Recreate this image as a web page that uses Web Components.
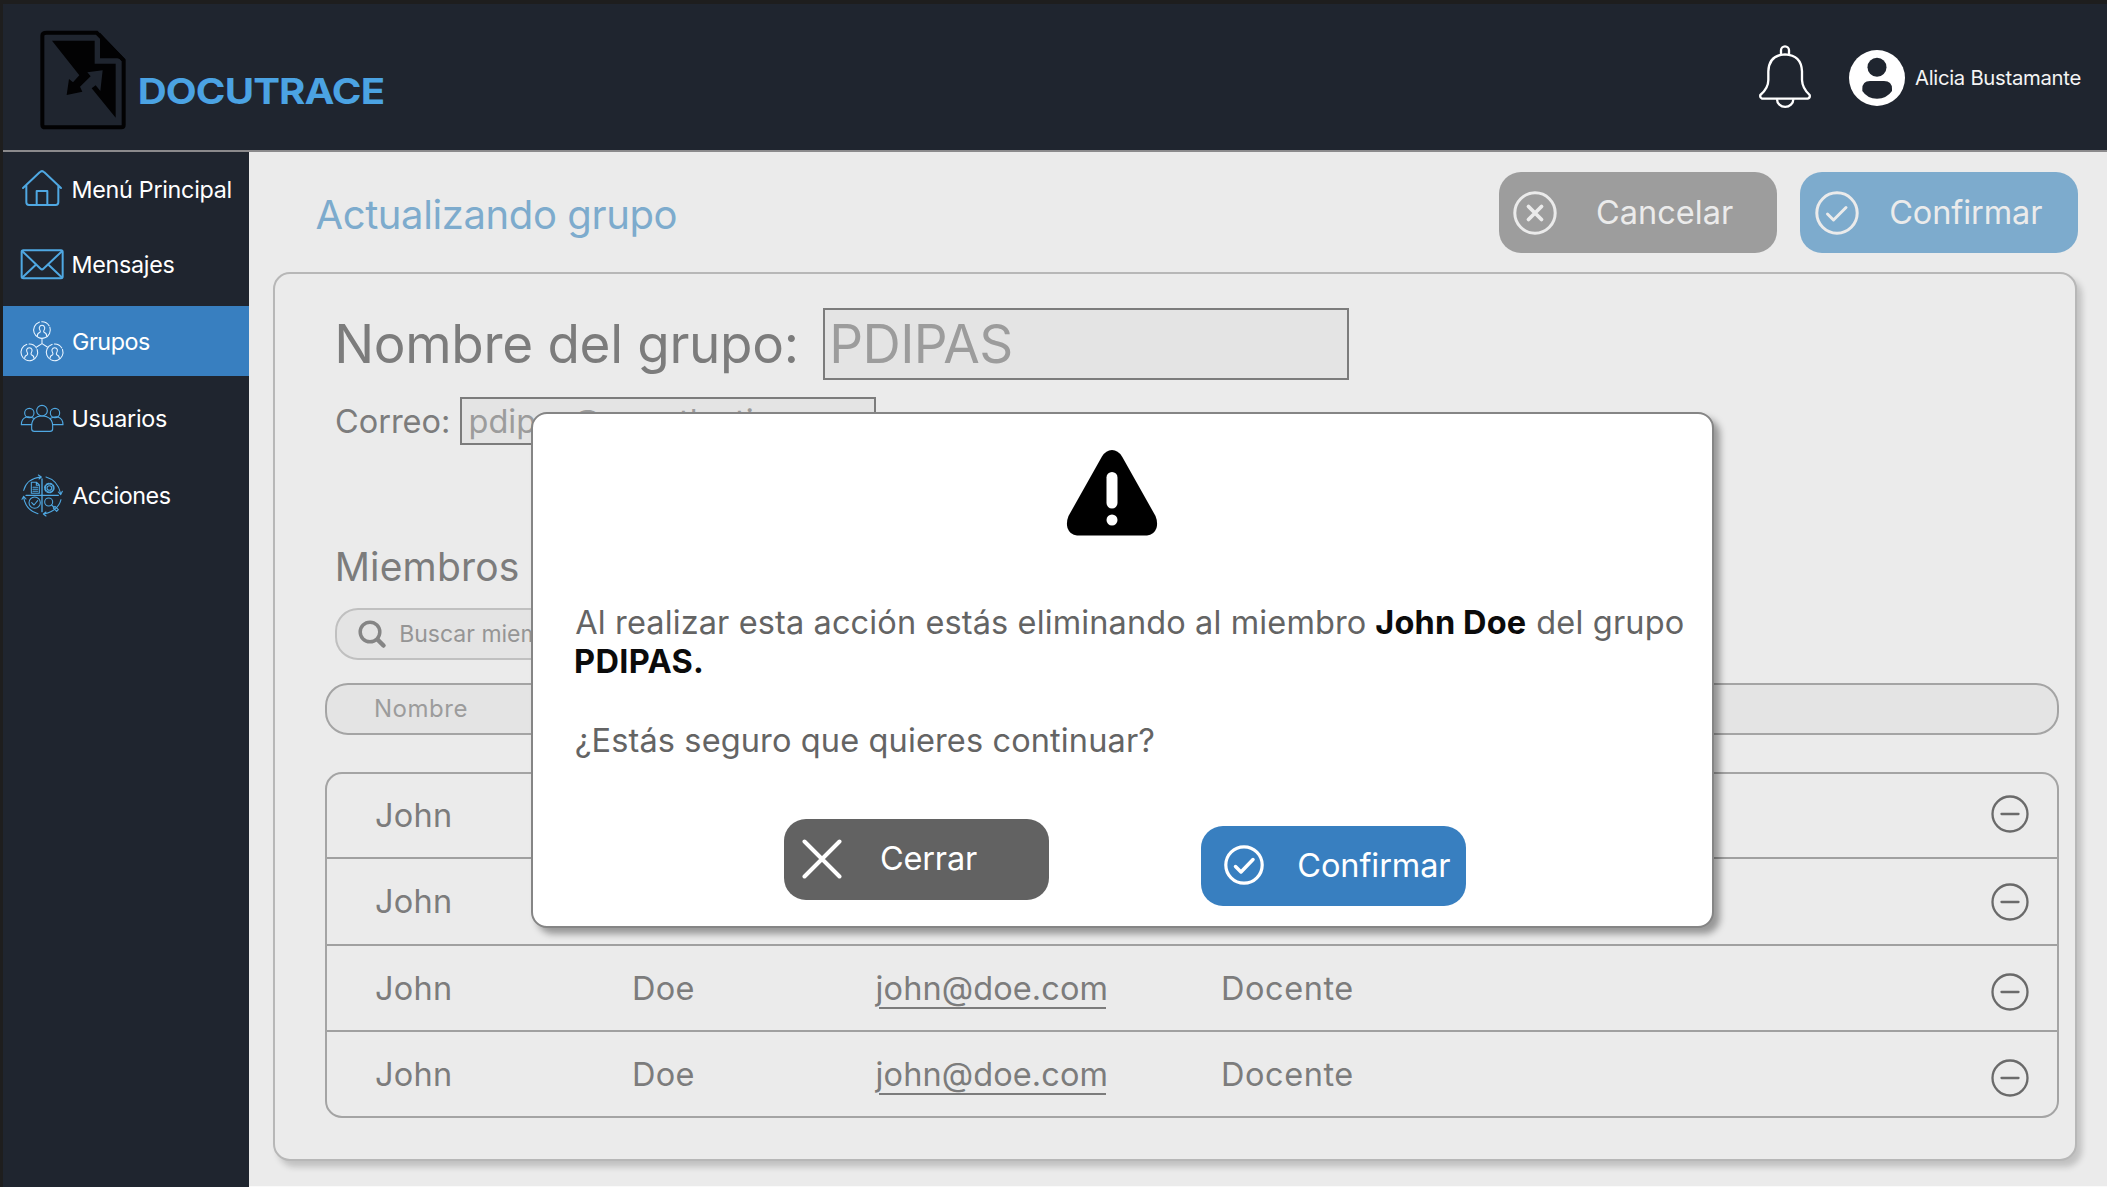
<!DOCTYPE html>
<html lang="es">
<head>
<meta charset="utf-8">
<title>Docutrace</title>
<style>
  html, body { margin: 0; height: 100%; }
  body { background: #1e1e1e; font-family: Inter, "Liberation Sans", sans-serif; overflow: hidden; }
</style>
</head>
<body>
<docu-app></docu-app>
<script>
const define = (name, html, init) => {
  const tpl = document.createElement('template');
  tpl.innerHTML = html;
  customElements.define(name, class extends HTMLElement {
    connectedCallback() {
      if (this.shadowRoot) return;
      this.attachShadow({ mode: 'open' }).append(tpl.content.cloneNode(true));
      if (init) init.call(this, this.shadowRoot);
    }
  });
};

/* Text whose visible ink starts at the box's left edge; "ink" sets the ink width through tracking. */
const ctx = document.createElement('canvas').getContext('2d');
define('ink-text', `<style>
  :host { display: block; line-height: 1; white-space: nowrap; flex: none; }
  span { display: block; }
</style><span><slot></slot></span>`, function (root) {
  const span = root.querySelector('span');
  const size = parseFloat(this.getAttribute('size'));
  const weight = this.getAttribute('weight') || '400';
  this.style.font = `${weight} ${size}px/1 Inter, "Liberation Sans", sans-serif`;
  const text = this.textContent;
  ctx.font = `${weight} ${size}px Inter`;
  const m = ctx.measureText(text);
  const lead = -m.actualBoundingBoxLeft;
  const ink = m.actualBoundingBoxRight - lead;
  span.style.marginLeft = -lead + 'px';
  const want = parseFloat(this.getAttribute('ink'));
  if (want) {
    span.style.letterSpacing = (want - ink) / (text.length - 1) + 'px';
    this.style.width = want + 'px';
  }
});

define('brand-logo', `<style>
  :host { display: flex; align-items: flex-start; }
  svg { display: block; width: 90px; height: 104px; }
  ink-text { color: #4ba3e3; margin: 45.5px 0 0 12.3px; transform: scaleX(1.12); transform-origin: 0 0; }
</style>
<svg viewBox="114 84 270 312">
  <path d="M140 98H290L371 181V375Q371 382 364 382H136Q127 382 127 374V107Q127 98 140 98Z" fill="none" stroke="#020203" stroke-width="12"/>
  <path d="M300 98L374 176L366 183Q362 176 352 175H300Z" fill="#020203"/>
  <path d="M156 122H284V191H347V353L275 265L287 256L301 273L308 211L262 217L272 229L240 260L247 275L200 285L207 237L219 247L238 226Z" fill="#020203"/>
</svg>
<ink-text size="35.8" weight="700" ink="217">DOCUTRACE</ink-text>`);

define('user-box', `<style>
  :host { display: flex; align-items: center; }
  svg { display: block; }
  .bell { width: 60px; height: 70px; margin-right: 32.2px; }
  .face { width: 60px; height: 60px; }
  ink-text { color: #f4f4f4; margin-left: 8px; }
</style>
<svg class="bell" viewBox="105 69 180 210" fill="none" stroke="#fff" stroke-width="7" stroke-linejoin="round">
  <path d="M183 103V91a12 12 0 0 1 24 0V103"/>
  <path d="M126 236Q119 234 121 225Q145 205 145 180V154Q147 105 195 103Q244 105 246 154V180Q247 205 269 225Q271 234 263 236Z"/>
  <path d="M171 238a24 22 0 0 0 49 0"/>
</svg>
<svg class="face" viewBox="381 84 180 180">
  <circle cx="471" cy="174" r="84" fill="#fff"/>
  <circle cx="471" cy="142" r="28.500" fill="#1f252f"/>
  <path d="M427 207Q427 183 450 183H492Q516 183 516 207V213Q500 236 471 236Q442 236 427 213Z" fill="#1f252f"/>
</svg>
<ink-text size="20.3" ink="165.4">Alicia Bustamante</ink-text>`);

define('app-header', `<style>
  :host { display: flex; justify-content: space-between; box-sizing: border-box; height: 148px;
    background: #1f252f; border-bottom: 2px solid #8b8a8c; }
  brand-logo { margin: 24px 0 0 35.5px; }
  user-box { height: 148px; margin-right: 26.6px; }
</style>
<brand-logo></brand-logo><user-box></user-box>`);

define('nav-item', `<style>
  :host { display: flex; align-items: center; color: #fff; padding-left: 17.5px; gap: 9px; box-sizing: border-box; --c: #4fa8e2; flex: none; }
  :host([active]) { background: #387fc0; --c: #eaf5ff; }
  ::slotted(svg) { width: 44px; height: 44px; flex: none; fill: none; stroke: var(--c); stroke-linejoin: round; stroke-linecap: round; overflow: visible; }
  ::slotted(ink-text) { margin-top: 1.4px; }
</style><slot></slot>`);

define('side-nav', `<style>
  :host { display: flex; flex-direction: column; background: #1f252f; }
</style>
<nav-item style="height:76px">
  <svg viewBox="60 54 132 132" stroke-width="6"><path d="M69 114L119 67Q126 60 133 67L183 114M79 106V157Q79 165 87 165H167Q175 165 175 157V106M110 163V123H142V163"/></svg>
  <ink-text size="23.3" ink="157" style="margin:0 0 0 .5px">Menú Principal</ink-text>
</nav-item>
<nav-item style="height:71px;margin-bottom:7.300px">
  <svg viewBox="60 274.500 132 132" stroke-width="6"><rect x="65" y="299" width="123" height="84" rx="5"/><path d="M67 302L121 354Q126 359 131 354L186 302M67 381L106 344M186 381L147 344"/></svg>
  <ink-text size="23.3" ink="101" style="margin-left:.5px">Mensajes</ink-text>
</nav-item>
<nav-item active style="height:69.400px">
  <svg viewBox="60 57 132 132" stroke-width="3.200">
    <defs><g id="p"><circle r="25" stroke-dasharray="118 7 26 6" transform="rotate(-20)"/><path d="M-14 18Q-14 10-6 7Q-4 5-6 1Q-9-4-8-8Q-6-14 0-14Q6-14 8-8Q9-4 6 1Q4 5 6 7Q14 10 14 18"/></g></defs>
    <use href="#p" x="126" y="90"/><use href="#p" x="88" y="157"/><use href="#p" x="164" y="157"/>
    <path d="M126 116V131L110 141M126 131L142 141"/></svg>
  <ink-text size="23.3" ink="77">Grupos</ink-text>
</nav-item>
<nav-item style="height:84.600px">
  <svg viewBox="60 288 132 132" stroke-width="3.400"><circle cx="126" cy="332" r="16"/><circle cx="88" cy="339" r="14"/><circle cx="165" cy="339" r="14"/>
    <path d="M112 350Q95 356 95 378V386Q95 394 103 394H150Q158 394 158 386V378Q158 356 140 350Q126 346 112 350ZM95 374H64Q64 356 79 351Q90 349 101 355M158 374H189Q189 356 174 351Q163 349 152 355"/></svg>
  <ink-text size="23.3" ink="93.500" style="margin-left:.5px">Usuarios</ink-text>
</nav-item>
<nav-item style="height:70px">
  <svg viewBox="60 520 132 132" stroke-width="3.200">
    <path d="M126 538V636M78 587H175" stroke-width="4"/>
    <path d="M71 572Q80 537 122 532M115 526L124 532L117 538M138 532Q174 542 182 582M175 577L182 585L187 575M183 600Q174 634 132 643M138 637L130 643L138 649M114 642Q78 632 71 594M66 599L71 590L78 598"/>
    <path d="M94 548H110L118 556V581H94ZM109 548V557H118M99 563H113M99 569H113M99 575H113"/>
    <circle cx="148" cy="565" r="7"/><circle cx="148" cy="565" r="14" stroke-dasharray="7 4" stroke-width="4"/><circle cx="148" cy="565" r="12"/>
    <circle cx="104" cy="609" r="17"/><path d="M95 609L102 616L113 603"/>
    <circle cx="146" cy="607" r="12"/><path d="M155 616L161 622M160 625L165 620L175 630L170 635Z"/></svg>
  <ink-text size="23.3" ink="98.500" style="margin:.6px 0 0 -.8px">Acciones</ink-text>
</nav-item>`);

define('pill-button', `<style>
  :host { display: flex; align-items: center; box-sizing: border-box; width: 278px; height: 80.8px; border-radius: 22px; background: var(--bg); color: var(--fg, #fff); flex: none; }
  ::slotted(svg) { flex: none; fill: none; stroke: currentColor; stroke-linecap: round; stroke-linejoin: round; }
</style><slot></slot>`);

define('title-bar', `<style>
  :host { display: flex; align-items: flex-start; height: 120px; box-sizing: border-box; padding: 19.8px 29.5px 0 67.5px; }
  .t { color: #7dabcd; margin: 23.4px auto 0 0; }
  pill-button { --fg: #ebebeb; }
  pill-button ink-text { margin-top: 3px; }
  pill-button svg { margin-top: 1.4px; }
  pill-button + pill-button { margin-left: 23px; }
</style>
<ink-text class="t" size="40" ink="359">Actualizando grupo</ink-text>
<pill-button style="--bg:#9d9d9d">
  <svg width="48" height="48" viewBox="-24 -24 48 48" stroke-width="3" style="margin-left:12px"><circle r="20.200"/><path d="M-6.500-6.500L6.500 6.500M6.500-6.500L-6.500 6.500" stroke-width="3.800"/></svg>
  <ink-text size="32.5" ink="136" style="margin-left:38.500px">Cancelar</ink-text>
</pill-button>
<pill-button style="--bg:#7dabcd">
  <svg width="48" height="48" viewBox="-24 -24 48 48" stroke-width="3" style="margin-left:13.700px"><circle r="20.200"/><path d="M-9.500 1L-3.500 7L9-5.500"/></svg>
  <ink-text size="32.5" ink="152" style="margin-left:29px">Confirmar</ink-text>
</pill-button>`);

define('text-field', `<style>
  :host { display: flex; align-items: center; box-sizing: border-box; background: #e4e4e4; border: 2px solid #7c7c7c; color: #9c9c9c; flex: none; }
</style><slot></slot>`);

define('member-row', `<style>
  :host { display: grid; grid-template-columns: 258.1px 241px 347.8px 1fr auto; align-items: start; box-sizing: border-box; padding: 27.3px 27.8px 0 49.3px; color: #7c7c7c; border-top: 2px solid #a0a0a0; }
  :host([first]) { border-top: 0; }
  .m { width: 231.5px; margin-left: -.5px; }
  .m i { display: block; height: 2px; background: #7c7c7c; margin: 1.6px 0 0 4.8px; }
  svg { display: block; width: 38px; height: 38px; margin-top: var(--i); }
</style>
<ink-text size="32.5" ink="74">John</ink-text>
<ink-text size="32.5" ink="59.500">Doe</ink-text>
<div class="m"><ink-text size="32.5" ink="231">john@doe.com</ink-text><i></i></div>
<ink-text size="32.5" ink="129.500">Docente</ink-text>
<svg viewBox="-19 -19 38 38" fill="none" stroke="#6a6a6a" stroke-width="2.300" stroke-linecap="round"><circle r="17.500"/><path d="M-8.500 0H8.500"/></svg>`);

define('member-table', `<style>
  :host { display: grid; grid-template-rows: 83.2px 87.3px 86px 1fr; box-sizing: border-box; height: 346px; border: 2px solid #a4a4a4; border-radius: 17px; }
</style>
<member-row first style="padding-top:26.700px;--i:-5.700px"></member-row>
<member-row style="--i:-3px"></member-row>
<member-row style="--i:-.700px"></member-row>
<member-row style="--i:-.300px"></member-row>`);

define('group-card', `<style>
  :host { display: block; box-sizing: border-box; width: 1804.5px; height: 888.5px; margin-left: 23.7px; border: 2px solid #b7b7b7; border-radius: 17px; background: #ebebeb; box-shadow: 5px 6px 6px rgba(0,0,0,.18); color: #7c7c7c; padding: 34px 16px 0 50px; }
  .a, .b { display: flex; align-items: center; padding-left: 13.5px; }
  .a text-field { width: 526px; height: 72.3px; margin-left: 27px; padding-left: 8.5px; }
  .b { margin-top: 16.5px; padding-left: 11.3px; }
  .b text-field { width: 416px; height: 48px; margin-left: 12px; padding-left: 8.5px; }
  .b ink-text { margin-top: 3.5px; }
  .m { margin: 102.5px 0 0 13px; }
  .s { display: flex; align-items: center; box-sizing: border-box; width: 520px; height: 52px; margin: 21.3px 0 0 10px; border: 2px solid #c0c0c0; border-radius: 23px; background: #e4e4e4; color: #959595; padding-left: 21.5px; }
  .s svg { width: 29px; height: 29px; margin: 1px 14px 0 0; }
  .s ink-text { margin-top: 1.5px; }
  .h { display: flex; align-items: center; box-sizing: border-box; height: 52px; margin: 23.5px 0 36.5px; border: 2px solid #a4a4a4; border-radius: 23px; background: #e4e4e4; color: #9c9c9c; padding-left: 49.3px; }
</style>
<div class="a"><ink-text size="53" ink="457.500">Nombre del grupo:</ink-text><text-field><ink-text size="53" ink="177">PDIPAS</ink-text></text-field></div>
<div class="b"><ink-text size="32.5" ink="112">Correo:</ink-text><text-field><ink-text size="32.5">pdipas@uneatlantico.es</ink-text></text-field></div>
<ink-text class="m" size="39" ink="180">Miembros</ink-text>
<div class="s"><svg viewBox="0 0 29 29" fill="none" stroke="#858585" stroke-linecap="round"><circle cx="12" cy="12" r="9.800" stroke-width="3.500"/><path d="M20 20L25.500 25.500" stroke-width="4.500"/></svg><ink-text size="23">Buscar miembro</ink-text></div>
<div class="h"><ink-text size="24" ink="90.500">Nombre</ink-text></div>
<member-table></member-table>`);

define('confirm-dialog', `<style>
  :host { display: flex; flex-direction: column; box-sizing: border-box; width: 1183px; height: 515.5px; background: #fff; border: 2px solid #858585; border-radius: 16px; box-shadow: 6px 6px 7px rgba(0,0,0,.36); color: #646464; padding: 35px 0 0 42.8px; }
  svg.w { display: block; width: 92px; height: 88px; margin-left: 490.3px; }
  .text { display: flex; flex-direction: column; margin-top: 70.2px; }
  .l { display: flex; align-items: flex-start; height: 39.2px; }
  .l b { display: contents; }
  .l b ink-text { color: #0b0b0b; }
  .btns { display: flex; align-items: flex-start; margin: 55px 0 0 208.5px; }
  pill-button { width: 265px; }
</style>
<svg class="w" viewBox="0 0 92 88"><path d="M36 7.500Q40 1 46 1Q52 1 56 7.500L89.500 67Q92 73 90.500 79Q88 86 81 86.500H11Q4 86 1.500 79Q0 73 2.500 67Z" fill="#000"/><path d="M46 28.500V54" stroke="#fff" stroke-width="11" stroke-linecap="round"/><circle cx="46" cy="71" r="5.500" fill="#fff"/></svg>
<div class="text">
  <div class="l"><ink-text size="32.5" ink="789.500">Al realizar esta acción estás eliminando al miembro</ink-text><b><ink-text size="32.5" weight="700" ink="149.500" style="margin-left:11.500px">John Doe</ink-text></b><ink-text size="32.5" ink="145.500" style="margin-left:11.500px">del grupo</ink-text></div>
  <div class="l"><b><ink-text size="32.5" weight="700" ink="126" style="margin-left:.8px">PDIPAS.</ink-text></b></div>
  <div class="l"></div>
  <div class="l"><ink-text size="32.5" ink="577.500" style="margin-left:.5px">¿Estás seguro que quieres continuar?</ink-text></div>
</div>
<div class="btns">
  <pill-button style="--bg:#626262">
    <svg width="40" height="40" viewBox="-20 -20 40 40" stroke-width="4" style="margin-left:18.500px"><path d="M-17.500-17.500L17.500 17.500M17.500-17.500L-17.500 17.500"/></svg>
    <ink-text size="32.5" ink="96" style="margin-left:38.700px">Cerrar</ink-text>
  </pill-button>
  <pill-button style="--bg:#387fc0;margin:6.600px 0 0 152.500px">
    <svg width="42" height="42" viewBox="-21 -21 42 42" stroke-width="3.200" style="margin:-1px 0 0 22px"><circle r="18.200"/><path d="M-8.500 1.500L-3 7L9-5.500" stroke-width="3.500"/></svg>
    <ink-text size="32.5" ink="152" style="margin-left:33px">Confirmar</ink-text>
  </pill-button>
</div>`);

define('docu-app', `<style>
  :host { display: grid; grid-template: 148px 1fr / 246.5px 1fr; height: 1187px; box-sizing: border-box; padding: 4px 0 0 2.5px; position: relative; }
  app-header { grid-column: 1 / 3; }
  main { background: #ebebeb; border-bottom: 1px solid #fafafa; min-width: 0; }
  confirm-dialog { position: absolute; left: 530.5px; top: 412px; }
</style>
<app-header></app-header>
<side-nav></side-nav>
<main><title-bar></title-bar><group-card></group-card></main>
<confirm-dialog></confirm-dialog>`);
</script>
</body>
</html>
